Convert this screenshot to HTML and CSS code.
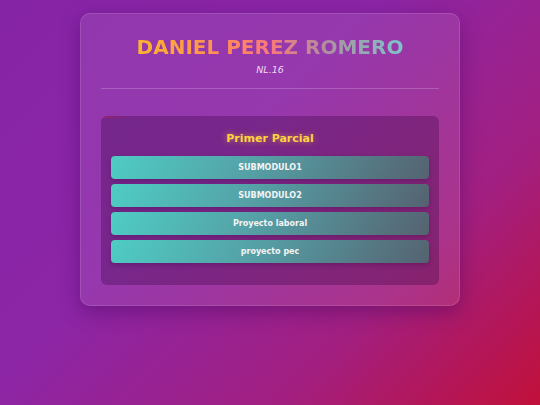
FILE: index.html
```html
<!DOCTYPE html>
<html lang="es">
<head>
<meta charset="utf-8">
<title>Daniel Perez Romero</title>
<link rel="stylesheet" href="styles.css">
</head>
<body>
<main class="card">
  <header class="head">
    <h1 class="name">DANIEL PEREZ ROMERO</h1>
    <p class="sub">NL.16</p>
  </header>
  <hr class="rule">
  <section class="panel">
    <h2 class="panel-title">Primer Parcial</h2>
    <div class="list">
      <a class="btn" href="#">SUBMODULO1</a>
      <a class="btn" href="#">SUBMODULO2</a>
      <a class="btn" href="#">Proyecto laboral</a>
      <a class="btn" href="#">proyecto pec</a>
    </div>
  </section>
</main>
</body>
</html>
```
FILE: styles.css
```css
html, body {
  margin: 0;
  padding: 0;
}
body {
  width: 540px;
  height: 405px;
  overflow: hidden;
  font-family: "DejaVu Sans", Verdana, sans-serif;
  background: linear-gradient(135deg, #8624a6 0%, #8c25a6 40%, #a21f80 72%, #c1103a 100%);
  display: flex;
  flex-direction: column;
  align-items: center;
  padding-top: 13px;
  box-sizing: border-box;
}
.card {
  width: 380px;
  box-sizing: border-box;
  padding: 21px 20px 20px;
  border-radius: 10px;
  background: rgba(255, 255, 255, 0.09);
  border: 1px solid rgba(255, 255, 255, 0.12);
  box-shadow: 0 6px 20px rgba(60, 0, 90, 0.4);
}
.head {
  text-align: center;
}
.name {
  margin: 0;
  font-size: 20px;
  line-height: 24px;
  font-weight: bold;
  letter-spacing: 0;
  background: linear-gradient(90deg, #fbb52c 0%, #ff8a5c 35%, #f97a7a 50%, #b08e9e 70%, #7ec4ca 100%);
  -webkit-background-clip: text;
  background-clip: text;
  color: transparent;
  display: inline-block;
}
.sub {
  margin: 5px 0 0;
  font-size: 9.5px;
  line-height: 12px;
  font-style: italic;
  color: #ecdcf2;
}
.rule {
  margin: 12px 0 0;
  border: 0;
  height: 1px;
  background: rgba(255, 255, 255, 0.2);
}
.panel {
  margin-top: 27px;
  border-radius: 6px;
  padding: 14px 10px 22px;
  border-top: 1px solid transparent;
  background-image: linear-gradient(90deg, rgba(200, 30, 60, 0.7) 0, rgba(200, 30, 60, 0) 30px);
  background-size: 100% 1px;
  background-repeat: no-repeat;
  background-color: rgba(50, 0, 60, 0.3);
}
.panel-title {
  margin: 0 0 9px;
  text-align: center;
  font-size: 11px;
  line-height: 16px;
  font-weight: bold;
  color: #ffd23f;
  text-shadow: 0 0 6px rgba(255, 200, 40, 0.55);
}
.list {
  display: flex;
  flex-direction: column;
  gap: 5px;
}
.btn {
  display: block;
  height: 23px;
  line-height: 23px;
  text-align: center;
  border-radius: 4px;
  background: linear-gradient(120deg, #4ecdc4 0%, #55a0a6 45%, #556270 100%);
  color: #f4f4f4;
  font-size: 8px;
  font-weight: bold;
  text-decoration: none;
  box-shadow: 0 2px 4px rgba(40, 0, 50, 0.25);
}
```
